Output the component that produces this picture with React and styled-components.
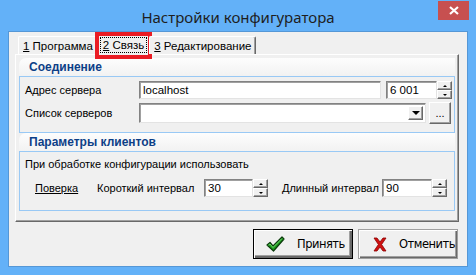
import React from 'react';
import styled, { createGlobalStyle } from 'styled-components';

const GlobalStyle = createGlobalStyle`
  html, body { margin: 0; padding: 0; }
  body {
    background: #63b1f8;
    font-family: "Liberation Sans", Arial, sans-serif;
    font-size: 11px;
    color: #000;
  }
`;

function CheckIcon() {
  return (
    <svg width="19" height="16" viewBox="0 0 19 16">
      <path d="M1 9 L4 6.5 L7 10 L16 1 L18 3 L7.5 15 Z" fill="#1f9b1f" stroke="#0b3a0b" strokeWidth="1.2" strokeLinejoin="round" />
      <path d="M2.5 9 L4 8 L7 11.5 L16 2.5" fill="none" stroke="#6fd86f" strokeWidth="1" />
    </svg>
  );
}

function CrossIcon() {
  return (
    <svg width="14" height="15" viewBox="0 0 14 15">
      <path d="M1 1 L4 1 L7 5 L10 1 L13 1 L8.6 7.5 L13 14 L10 14 L7 10 L4 14 L1 14 L5.4 7.5 Z" fill="#d01010" stroke="#8a0000" strokeWidth="0.8" strokeLinejoin="round" />
    </svg>
  );
}

function Spinner() {
  return (
    <Spin>
      <SpinBtn><Arrow up /></SpinBtn>
      <SpinBtn><Arrow /></SpinBtn>
    </Spin>
  );
}

function App() {
  return (
    <>
      <GlobalStyle />
      <Window>
        <TitleBar>
          <span />
          <Title>Настройки конфигуратора</Title>
          <CloseBtn>
            <svg width="10" height="9" viewBox="0 0 10 9">
              <path d="M1 1 L9 8 M9 1 L1 8" stroke="#fff" strokeWidth="2.2" />
            </svg>
          </CloseBtn>
        </TitleBar>
        <Client>
          <Tabs>
            <Tab><span><u>1</u> Программа</span></Tab>
            <Tab active>
              <Focus><u>2</u> Связь</Focus>
            </Tab>
            <Tab><span><u>3</u> Редактирование</span></Tab>
          </Tabs>
          <Page>
            <Header>Соединение</Header>
            <Group>
              <Row>
                <Label width={114}>Адрес сервера</Label>
                <Input width={242}>localhost</Input>
                <Input width={51} style={{ marginLeft: 5 }}>6 001</Input>
                <Spinner />
              </Row>
              <Row>
                <Label width={114}>Список серверов</Label>
                <Combo>
                  <DropBtn><Arrow big /></DropBtn>
                </Combo>
                <DotsBtn>...</DotsBtn>
              </Row>
            </Group>
            <Header>Параметры клиентов</Header>
            <Group tall>
              <Caption>При обработке конфигурации использовать</Caption>
              <Row>
                <Link>Поверка</Link>
                <Label width={107}>Короткий интервал</Label>
                <Input width={49}>30</Input>
                <Spinner />
                <Label width={100} style={{ marginLeft: 14 }}>Длинный интервал</Label>
                <Input width={50}>90</Input>
                <Spinner />
              </Row>
            </Group>
          </Page>
          <Footer>
            <Button primary>
              <CheckIcon />
              <span>Принять</span>
            </Button>
            <Button>
              <CrossIcon />
              <span>Отменить</span>
            </Button>
          </Footer>
        </Client>
      </Window>
    </>
  );
}

export default App;

const Window = styled.div`
  width: 476px;
  height: 275px;
  display: flex;
  flex-direction: column;
  background: #63b1f8;
`;

const TitleBar = styled.div`
  height: 31px;
  display: grid;
  grid-template-columns: 1fr auto 1fr;
  align-items: center;
`;

const Title = styled.div`
  font-family: "Noto Sans", "Open Sans", sans-serif;
  font-size: 15px;
  color: #1e1e1e;
  padding-top: 3px;
`;

const CloseBtn = styled.div`
  justify-self: end;
  align-self: start;
  margin: 1px 7px 0 0;
  width: 31px;
  height: 19px;
  background: #c75050;
  display: flex;
  align-items: center;
  justify-content: center;
`;

const Client = styled.div`
  flex: 1;
  margin: 0 8px 8px;
  background: #f0f0f0;
  border: 1px solid #5597d6;
  padding: 2px 8px 7px 6px;
  display: flex;
  flex-direction: column;
`;

const Tabs = styled.div`
  height: 20px;
  display: flex;
  align-items: flex-end;
  padding-left: 3px;
  position: relative;
  z-index: 1;
`;

const Tab = styled.div`
  height: ${p => (p.active ? '21px' : '18px')};
  margin: ${p => (p.active ? '0 -1px -1px' : '0')};
  padding: 0 4px;
  display: flex;
  align-items: center;
  box-sizing: border-box;
  background: #f0f0f0;
  border-top: 1px solid #fff;
  border-left: 1px solid #fff;
  border-right: 1px solid #696969;
  box-shadow: inset -1px 0 #a0a0a0;
  border-radius: 2px 2px 0 0;
  position: relative;
  white-space: nowrap;
  font-size: 11.5px;

  &::after {
    content: '';
    display: ${p => (p.active ? 'block' : 'none')};
    position: absolute;
    left: -3px;
    right: -3px;
    top: -3px;
    bottom: -4px;
    border: 4px solid #ea1c24;
  }
`;

const Focus = styled.span`
  outline: 1px dotted #000;
  outline-offset: 1px;
  padding: 0 1px;
`;

const Page = styled.div`
  height: 168px;
  box-sizing: border-box;
  border: 1px solid;
  border-color: #fff #696969 #696969 #fff;
  box-shadow: inset -1px -1px #a0a0a0;
  padding: 3px 2px 0 3px;
  display: flex;
  flex-direction: column;
`;

const Header = styled.div`
  height: 18px;
  padding-left: 10px;
  display: flex;
  align-items: center;
  font-weight: bold;
  color: #0d3f87;
  font-size: 12px;
  border-radius: 7px 0 0 0;
  background: linear-gradient(#fdfdfd, #f2f2f2);
  margin-right: 1px;
`;

const Group = styled.div`
  height: ${p => (p.tall ? '60px' : '57px')};
  box-sizing: border-box;
  margin-right: 1px;
  border: 1px solid #99c9f5;
  padding: ${p => (p.tall ? '5px 5px 0' : '3px 3px 0 5px')};
  display: flex;
  flex-direction: column;
  gap: ${p => (p.tall ? '7px' : '3px')};
`;

const Row = styled.div`
  display: flex;
  align-items: center;
  height: 20px;
`;

const Label = styled.span`
  width: ${p => p.width}px;
  flex: none;
  white-space: nowrap;
`;

const Caption = styled.div`
  height: 14px;
  line-height: 14px;
`;

const Link = styled.span`
  text-decoration: underline;
  margin-left: 10px;
  width: 62px;
  flex: none;
`;

const Input = styled.div`
  width: ${p => p.width}px;
  height: 18px;
  box-sizing: border-box;
  flex: none;
  background: #fff;
  border: 1px solid;
  border-color: #828282 #e3e3e3 #e3e3e3 #828282;
  box-shadow: inset 1px 1px #a0a0a0;
  padding: 1px 0 0 3px;
  line-height: 15px;
  font-size: 11.5px;
`;

const Spin = styled.div`
  width: 15px;
  height: 18px;
  display: flex;
  flex-direction: column;
  flex: none;
`;

const SpinBtn = styled.div`
  flex: 1;
  background: #f0f0f0;
  border: 1px solid;
  border-color: #fff #696969 #696969 #fff;
  box-shadow: inset -1px -1px #a0a0a0;
  display: flex;
  align-items: center;
  justify-content: center;
`;

const Arrow = styled.span`
  width: 0;
  height: 0;
  border-left: ${p => (p.big ? 4 : 2)}px solid transparent;
  border-right: ${p => (p.big ? 4 : 2)}px solid transparent;
  ${p => (p.up ? 'border-bottom: 2px solid #000;' : `border-top: ${p.big ? 4 : 2}px solid #000;`)}
`;

const Combo = styled.div`
  width: 288px;
  height: 20px;
  box-sizing: border-box;
  background: #fff;
  border: 1px solid;
  border-color: #828282 #e3e3e3 #e3e3e3 #828282;
  box-shadow: inset 1px 1px #a0a0a0;
  display: flex;
  justify-content: flex-end;
  padding: 2px;
`;

const DropBtn = styled.div`
  width: 15px;
  box-sizing: border-box;
  background: #f0f0f0;
  border: 1px solid;
  border-color: #fff #696969 #696969 #fff;
  box-shadow: inset -1px -1px #a0a0a0;
  display: flex;
  align-items: center;
  justify-content: center;
`;

const DotsBtn = styled.div`
  width: 22px;
  height: 22px;
  box-sizing: border-box;
  margin-left: 3px;
  background: #f0f0f0;
  border: 1px solid;
  border-color: #fff #696969 #696969 #fff;
  box-shadow: inset -1px -1px #a0a0a0;
  display: flex;
  align-items: flex-end;
  justify-content: center;
  padding-bottom: 4px;
  font-size: 11px;
  line-height: 1;
`;

const Footer = styled.div`
  margin-top: auto;
  display: flex;
  justify-content: flex-end;
  gap: 5px;
  padding-right: 1px;
`;

const Button = styled.div`
  width: 100px;
  height: 30px;
  box-sizing: border-box;
  background: #f0f0f0;
  border: 1px solid ${p => (p.primary ? '#000' : '#a0a0a0')};
  box-shadow: ${p => (p.primary
    ? 'inset 1px 1px #fff, inset -2px -2px #696969, inset -3px -3px #a0a0a0'
    : 'inset 1px 1px #fff, inset -1px -1px #696969, inset -2px -2px #a0a0a0')};
  display: flex;
  align-items: center;
  padding-left: ${p => (p.primary ? '12px' : '14px')};
  gap: 12px;
  font-family: "DejaVu Sans", Verdana, sans-serif;
  font-size: 11.5px;
  letter-spacing: -0.5px;
`;
